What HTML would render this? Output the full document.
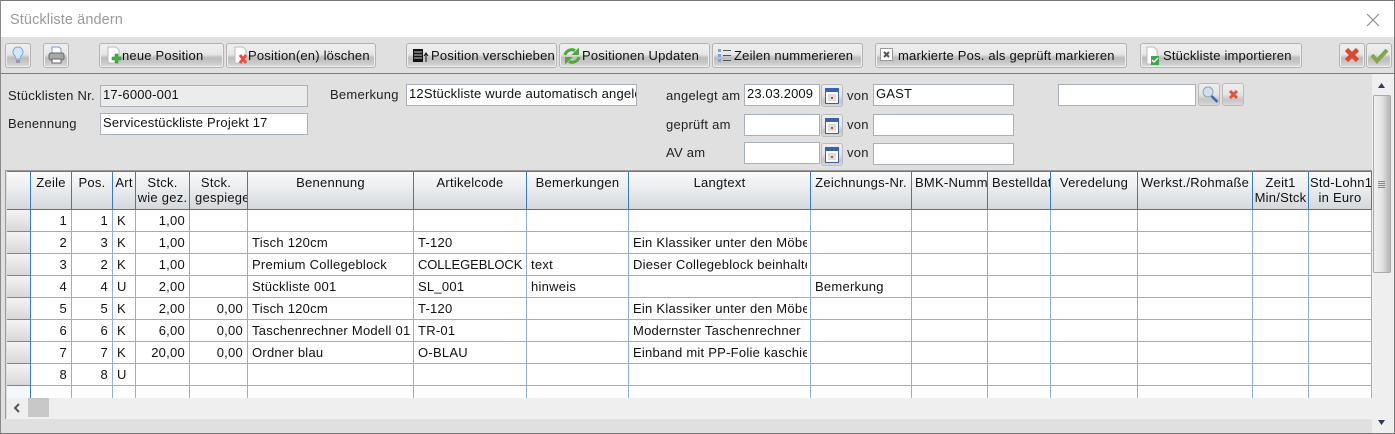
<!DOCTYPE html>
<html><head><meta charset="utf-8"><style>
html,body{margin:0;padding:0;width:1395px;height:434px;overflow:hidden;background:#e0e0e0}
body{position:relative;font:13px "Liberation Sans",sans-serif;color:#111;letter-spacing:.2px}
.a{position:absolute}
.lb{position:absolute;white-space:nowrap;line-height:16px;color:#222;letter-spacing:.25px}
.btn{position:absolute;top:43px;height:23px;border:1px solid #b4b4b4;border-radius:3px;background:linear-gradient(#f0f0f0 0,#e6e6e6 45%,#bdbdbd 60%,#c8c8c8 80%,#dcdcdc 100%);white-space:nowrap;line-height:23px;color:#111;box-shadow:inset 0 0 0 1px #eee}
.btn span{position:absolute;top:0}
.btn svg{position:absolute}
.in{position:absolute;height:20px;border:1px solid #a8b0bc;background:#fff;line-height:17px;padding-left:2px;white-space:nowrap;overflow:hidden;box-sizing:content-box;color:#111}
.sb{position:absolute;height:21px;width:20px;border:1px solid #bbb;border-radius:3px;background:linear-gradient(#eee 0,#e4e4e4 50%,#c4c4c4 75%,#d8d8d8 100%)}
.sb svg{position:absolute;left:2px;top:2px}
table{position:absolute;left:7px;top:171px;border-collapse:separate;border-spacing:0;table-layout:fixed;width:1365px;background:#fff}
td,th{padding:0 3px 0 4px;overflow:hidden;white-space:nowrap;font-weight:normal;box-sizing:border-box;line-height:15px;color:#111;letter-spacing:.25px}
th{height:39px;vertical-align:top;text-align:center;background:linear-gradient(#fafafa 0,#eceef0 40%,#d6d9dc 100%);border-right:1px solid #3c78c8;border-bottom:1px solid #3c78c8;border-top:1px solid #777;padding:3px 1px 0;line-height:15px}
td{height:22px;border-right:1px solid #8fb0dc;border-bottom:1px solid #8fb0dc;line-height:21px}
td.r{text-align:right;padding-right:4px}
td.h{background:linear-gradient(#f4f4f4,#d8d8d8);border-right:1px solid #3c78c8;border-bottom:1px solid #5a8ad0}
.c{display:block;width:174px;overflow:hidden}
</style></head><body>
<!-- window frame -->
<div class="a" style="left:0;top:0;width:1395px;height:37px;background:#fff"></div>
<div class="a" style="left:0;top:0;width:1395px;height:1px;background:#777"></div>
<div class="a" style="left:0;top:0;width:1px;height:434px;background:#8a8a8a"></div>
<div class="a" style="left:1394px;top:0;width:1px;height:434px;background:#777"></div>
<div class="a" style="left:0;top:433px;width:1395px;height:1px;background:#777"></div>
<div class="a" style="left:10px;top:11px;font-size:14.5px;line-height:18px;color:#9a9a9a;white-space:nowrap;letter-spacing:.1px">Stückliste ändern</div>
<svg class="a" style="left:1366px;top:13px" width="14" height="14"><path d="M1 1L13 13M13 1L1 13" stroke="#888" stroke-width="1" fill="none"/></svg>
<div class="a" style="left:1px;top:73px;width:1393px;height:1px;background:#7c7c7c"></div>

<!-- toolbar -->
<div class="btn" style="left:5px;width:24px"><svg width="24" height="23" style="left:0;top:0"><path d="M12 3a5 5 0 0 1 3 9l-1 3h-4l-1-3a5 5 0 0 1 3-9z" fill="#cfe6fb" stroke="#78a8d8"/><path d="M10 16h4v3h-4z" fill="#999"/></svg></div>
<div class="btn" style="left:43px;width:24px"><svg width="24" height="23" style="left:0;top:0"><path d="M8 3h7l2 2v5H8z" fill="#fff" stroke="#7a9cc0"/><rect x="5" y="9" width="15" height="7" rx="2" fill="#a8a8a8" stroke="#666"/><rect x="8" y="15" width="9" height="4" fill="#fff" stroke="#666"/></svg></div>

<div class="btn" style="left:99px;width:123px"><svg width="18" height="20" style="left:6px;top:2px"><path d="M2 1h8l3 3v13H2z" fill="#fff" stroke="#bbb"/><path d="M9 8h3v3h3v3h-3v3H9v-3H6v-3h3z" fill="#45b045" stroke="#2d8a2d" stroke-width=".5"/></svg><span style="left:22px">neue Position</span></div>
<div class="btn" style="left:226px;width:148px"><svg width="18" height="20" style="left:6px;top:2px"><path d="M2 1h8l3 3v13H2z" fill="#fff" stroke="#bbb"/><path d="M7 9l6 8M13 9l-6 8" stroke="#e8503a" stroke-width="3"/></svg><span style="left:21px">Position(en) löschen</span></div>
<div class="btn" style="left:406px;width:149px"><svg width="18" height="20" style="left:4px;top:2px"><path d="M2 3h10v13H2z" fill="#111"/><path d="M3 6h8M3 9h8M3 12h8" stroke="#ccc"/><path d="M15 16V8M13 10l2-3 2 3" stroke="#111" fill="none"/></svg><span style="left:24px">Position verschieben</span></div>
<div class="btn" style="left:559px;width:149px"><svg width="20" height="20" style="left:2px;top:2px"><path d="M3 9A7 7 0 0 1 13 4.500" stroke="#4fa83a" stroke-width="3" fill="none"/><path d="M17 1.500v7.500h-7.500z" fill="#4fa83a"/><path d="M17 11A7 7 0 0 1 7 15.500" stroke="#4fa83a" stroke-width="3" fill="none"/><path d="M3 18.500v-7.500h7.500z" fill="#4fa83a"/></svg><span style="left:22px">Positionen Updaten</span></div>
<div class="btn" style="left:712px;width:149px"><svg width="16" height="18" style="left:3px;top:3px"><path d="M2 2h3v3H2zM2 7h3v3H2zM2 12h3v3H2z" fill="#7ba6dc"/><path d="M7 3.500h8M7 8.500h8M7 13.500h8" stroke="#555"/></svg><span style="left:21px">Zeilen nummerieren</span></div>
<div class="btn" style="left:875px;width:250px"><svg width="16" height="16" style="left:3px;top:3px"><rect x="1.500" y="1.500" width="12" height="12" fill="#fff" stroke="#999"/><path d="M5 5l5 5M10 5l-5 5" stroke="#555" stroke-width="2"/></svg><span style="left:22px">markierte Pos. als geprüft markieren</span></div>
<div class="btn" style="left:1140px;width:160px"><svg width="18" height="20" style="left:4px;top:2px"><path d="M2 1h7l3 3v14H2z" fill="#fff" stroke="#bbb"/><rect x="6" y="10" width="8" height="9" fill="#3aa84a"/><path d="M7 14l2 2 4-4" stroke="#fff" fill="none" stroke-width="1.500"/></svg><span style="left:22px">Stückliste importieren</span></div>
<div class="btn" style="left:1339px;width:24px"><svg width="20" height="20" style="left:2px;top:1px"><path d="M4.500 4.500l11 11M15.500 4.500l-11 11" stroke="#d84a30" stroke-width="4.500"/></svg></div>
<div class="btn" style="left:1366px;width:24px"><svg width="20" height="20" style="left:2px;top:1px"><path d="M3 10l5 6L18 5" stroke="#80a848" stroke-width="4" fill="none"/></svg></div>

<!-- form -->
<div class="lb" style="left:8px;top:88px">Stücklisten Nr.</div>
<div class="in" style="left:100px;top:85px;width:204px;background:#ececec">17-6000-001</div>
<div class="lb" style="left:8px;top:116px">Benennung</div>
<div class="in" style="left:100px;top:113px;width:204px">Servicestückliste Projekt 17</div>
<div class="lb" style="left:330px;top:87px">Bemerkung</div>
<div class="in" style="left:406px;top:84px;width:227px">12Stückliste wurde automatisch angelegt</div>
<div class="lb" style="left:666px;top:88px">angelegt am</div>
<div class="in" style="left:744px;top:84px;width:72px;letter-spacing:.1px">23.03.2009</div>
<div class="lb" style="left:666px;top:117px">geprüft am</div>
<div class="in" style="left:744px;top:114px;width:72px"></div>
<div class="lb" style="left:666px;top:145px">AV am</div>
<div class="in" style="left:744px;top:142px;width:72px"></div>
<div class="sb" style="left:821px;top:84px"><svg width="16" height="18"><rect x="1.500" y="1.500" width="13" height="15" fill="#fff" stroke="#3a62a8"/><rect x="2" y="2" width="12" height="3" fill="#3a62a8"/><rect x="4" y="7" width="8" height="7" fill="#ddd"/><rect x="7" y="10" width="2" height="2" fill="#d04a30"/></svg></div>
<div class="sb" style="left:821px;top:114px"><svg width="16" height="18"><rect x="1.500" y="1.500" width="13" height="15" fill="#fff" stroke="#3a62a8"/><rect x="2" y="2" width="12" height="3" fill="#3a62a8"/><rect x="4" y="7" width="8" height="7" fill="#ddd"/><rect x="7" y="10" width="2" height="2" fill="#d04a30"/></svg></div>
<div class="sb" style="left:821px;top:143px"><svg width="16" height="18"><rect x="1.500" y="1.500" width="13" height="15" fill="#fff" stroke="#3a62a8"/><rect x="2" y="2" width="12" height="3" fill="#3a62a8"/><rect x="4" y="7" width="8" height="7" fill="#ddd"/><rect x="7" y="10" width="2" height="2" fill="#d04a30"/></svg></div>
<div class="lb" style="left:847px;top:88px">von</div>
<div class="in" style="left:873px;top:84px;width:137px">GAST</div>
<div class="lb" style="left:847px;top:117px">von</div>
<div class="in" style="left:873px;top:114px;width:137px"></div>
<div class="lb" style="left:847px;top:145px">von</div>
<div class="in" style="left:873px;top:143px;width:137px"></div>
<div class="in" style="left:1058px;top:84px;width:134px"></div>
<div class="sb" style="left:1198px;top:83px"><svg width="18" height="18"><circle cx="7" cy="6" r="5" fill="#cfe0f5" stroke="#8aa"/><path d="M10.500 10l6 6" stroke="#3a6ab0" stroke-width="2.500"/></svg></div>
<div class="sb" style="left:1222px;top:83px"><svg width="18" height="18"><path d="M5 5l7 7M12 5l-7 7" stroke="#e8503a" stroke-width="3"/></svg></div>

<!-- grid -->
<div class="a" style="left:5px;top:170px;width:1367px;height:249px;border-left:1px solid #999;border-top:1px solid #999;box-sizing:border-box"></div>
<div class="a" style="left:6px;top:171px;width:1366px;height:227px;overflow:hidden">
<table style="left:1px;top:0">
<colgroup><col style="width:24px"><col style="width:41px"><col style="width:41px"><col style="width:23px"><col style="width:54px"><col style="width:58px"><col style="width:166px"><col style="width:113px"><col style="width:102px"><col style="width:182px"><col style="width:101px"><col style="width:76px"><col style="width:63px"><col style="width:87px"><col style="width:115px"><col style="width:56px"><col style="width:63px"></colgroup>
<tr><th></th><th>Zeile</th><th>Pos.</th><th>Art</th><th>Stck.<br>wie gez.</th><th style="padding-left:5px;text-align:left"><span style="display:block;text-align:center;width:42px">Stck.</span>gespiegelt</th><th>Benennung</th><th>Artikelcode</th><th>Bemerkungen</th><th>Langtext</th><th>Zeichnungs-Nr.</th><th style="text-align:left;padding-left:3px">BMK-Nummer</th><th style="text-align:left;padding-left:4px">Bestelldatum</th><th>Veredelung</th><th>Werkst./Rohmaße</th><th>Zeit1<br>Min/Stck</th><th>Std-Lohn1<br>in Euro</th></tr>
<tr><td class="h"></td><td class="r">1</td><td class="r">1</td><td>K</td><td class="r">1,00</td><td></td><td></td><td></td><td></td><td></td><td></td><td></td><td></td><td></td><td></td><td></td><td></td></tr>
<tr><td class="h"></td><td class="r">2</td><td class="r">3</td><td>K</td><td class="r">1,00</td><td></td><td>Tisch 120cm</td><td>T-120</td><td></td><td><span class="c">Ein Klassiker unter den Möbeln</span></td><td></td><td></td><td></td><td></td><td></td><td></td><td></td></tr>
<tr><td class="h"></td><td class="r">3</td><td class="r">2</td><td>K</td><td class="r">1,00</td><td></td><td>Premium Collegeblock</td><td style="letter-spacing:-.1px">COLLEGEBLOCK</td><td>text</td><td><span class="c">Dieser Collegeblock beinhaltet</span></td><td></td><td></td><td></td><td></td><td></td><td></td><td></td></tr>
<tr><td class="h"></td><td class="r">4</td><td class="r">4</td><td>U</td><td class="r">2,00</td><td></td><td>Stückliste 001</td><td>SL_001</td><td>hinweis</td><td></td><td>Bemerkung</td><td></td><td></td><td></td><td></td><td></td><td></td></tr>
<tr><td class="h"></td><td class="r">5</td><td class="r">5</td><td>K</td><td class="r">2,00</td><td class="r">0,00</td><td>Tisch 120cm</td><td>T-120</td><td></td><td><span class="c">Ein Klassiker unter den Möbeln</span></td><td></td><td></td><td></td><td></td><td></td><td></td><td></td></tr>
<tr><td class="h"></td><td class="r">6</td><td class="r">6</td><td>K</td><td class="r">6,00</td><td class="r">0,00</td><td>Taschenrechner Modell 01</td><td>TR-01</td><td></td><td><span class="c">Modernster Taschenrechner</span></td><td></td><td></td><td></td><td></td><td></td><td></td><td></td></tr>
<tr><td class="h"></td><td class="r">7</td><td class="r">7</td><td>K</td><td class="r">20,00</td><td class="r">0,00</td><td>Ordner blau</td><td>O-BLAU</td><td></td><td><span class="c">Einband mit PP-Folie kaschiert</span></td><td></td><td></td><td></td><td></td><td></td><td></td><td></td></tr>
<tr><td class="h"></td><td class="r">8</td><td class="r">8</td><td>U</td><td></td><td></td><td></td><td></td><td></td><td></td><td></td><td></td><td></td><td></td><td></td><td></td><td></td></tr>
<tr><td style="background:#f4f8fd;border-right:1px solid #3c78c8"></td><td></td><td></td><td></td><td></td><td></td><td></td><td></td><td></td><td></td><td></td><td></td><td></td><td></td><td></td><td></td><td></td></tr>
</table></div>

<!-- horizontal scrollbar -->
<div class="a" style="left:7px;top:398px;width:1365px;height:20px;background:#efefef"></div>
<div class="a" style="left:28px;top:398px;width:21px;height:19px;background:#c8c8c8"></div>
<svg class="a" style="left:12px;top:402px" width="10" height="12"><path d="M7 2L3 6l4 4" stroke="#555" stroke-width="2" fill="none"/></svg>
<div class="a" style="left:6px;top:418px;width:1366px;height:1px;background:#f2f2f2"></div>

<!-- vertical scrollbar -->
<div class="a" style="left:1372px;top:74px;width:22px;height:359px;background:#efefef"></div>
<div class="a" style="left:1373px;top:95px;width:18px;height:178px;box-sizing:border-box;border:1px solid #aaa;border-radius:2px;background:linear-gradient(90deg,#f0f0f0,#e4e4e4 50%,#bcbcbc 90%)"></div>
<svg class="a" style="left:1377px;top:180px" width="10" height="10"><path d="M1 1.500h7M1 3.500h7M1 5.500h7M1 7.500h7" stroke="#888"/></svg>
<svg class="a" style="left:1377px;top:82px" width="10" height="8"><path d="M4.500 1L8 6H1z" fill="#2c3c5c"/></svg>
<svg class="a" style="left:1377px;top:419px" width="10" height="8"><path d="M1 1h7L4.500 6z" fill="#2c3c5c"/></svg>
</body></html>
